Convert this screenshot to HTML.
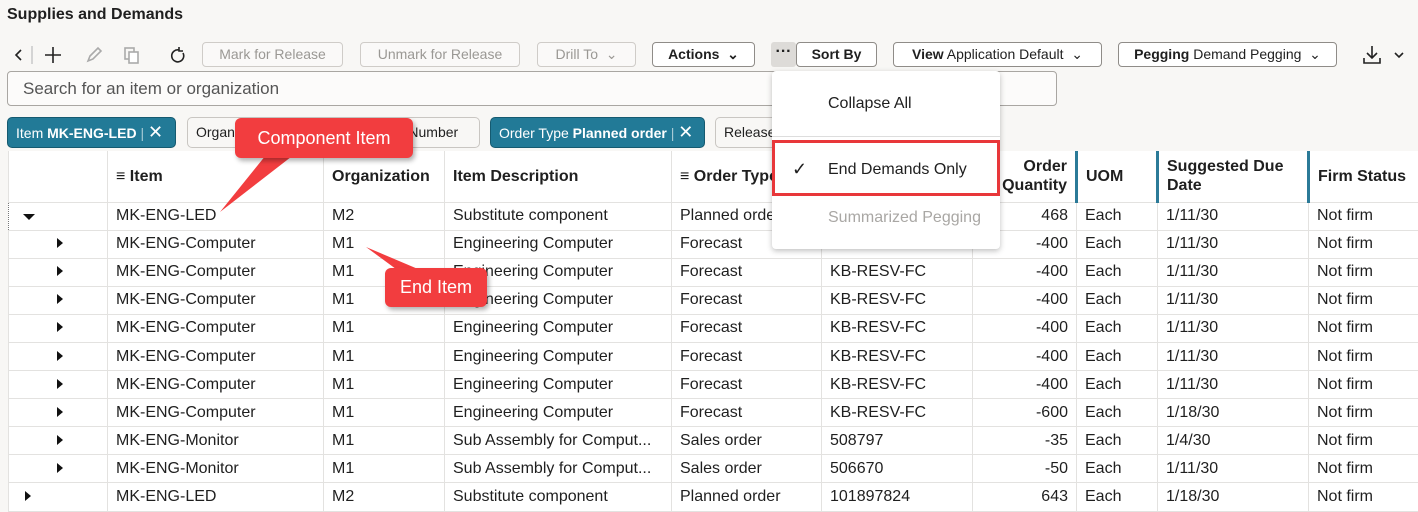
<!DOCTYPE html>
<html><head><style>
*{box-sizing:border-box;margin:0;padding:0}
body{width:1418px;height:510px;overflow:hidden;background:#f8f7f5;font-family:"Liberation Sans",sans-serif;color:#1f1f1f;position:relative}
.a{position:absolute}
.btn{position:absolute;top:42px;height:25px;border:1px solid #8f8c88;border-radius:4px;font-size:14px;line-height:23px;text-align:center;background:#fff;color:#1f1f1f}
.dis{border-color:#cfccc8;color:#9a9894;background:#faf9f8}
.chip{position:absolute;top:117px;height:31px;border-radius:5px;font-size:14px;line-height:29px;padding:0 8px;border:1px solid #c9c6c2;background:#f8f7f5}
.chipb{background:#227a97;border-color:#155a70;color:#fff}
table{position:absolute;left:8px;top:151px;width:1410px;border-collapse:collapse;background:#fff;font-size:16px;table-layout:fixed}
td,th{border:1px solid #e3e2e0;height:28.1px;padding:0 8px;white-space:nowrap;overflow:hidden;text-align:left;font-weight:normal}
th{height:51px;font-weight:bold;font-size:16px;line-height:19px;border-top:none}
.r{text-align:right}
.bl{border-left:3px solid #2b7a98}
.tri{display:inline-block;width:0;height:0;border-top:5px solid transparent;border-bottom:5px solid transparent;border-left:6px solid #111}
.tridn{display:inline-block;width:0;height:0;border-left:6px solid transparent;border-right:6px solid transparent;border-top:6px solid #111}
.call{position:absolute;background:#f23d3f;color:#fff;font-size:18px;border-radius:6px;text-align:center;box-shadow:2px 3px 5px rgba(0,0,0,.3)}
</style></head><body>
<div class="a" style="left:7px;top:6px;font-size:16px;font-weight:bold">Supplies and Demands</div>
<svg class="a" style="left:8px;top:44px" width="190" height="22" viewBox="0 0 190 22" fill="none" stroke="#222" stroke-width="1.6">
<path d="M13 6l-5 5 5 5"/><line x1="24" y1="2" x2="24" y2="20" stroke="#ccc"/>
<path d="M45 3v16M37 11h16"/>
<path d="M80 17l2-5 8-8 3 3-8 8z" stroke="#aaa"/>
<rect x="117" y="4" width="9" height="11" stroke="#aaa"/><rect x="121" y="8" width="9" height="11" stroke="#aaa" fill="#fff"/>
<path d="M171 6a6 6 0 1 0 4 3M171 3v4h4" />
</svg>
<div class="btn dis" style="left:202px;width:141px">Mark for Release</div>
<div class="btn dis" style="left:360px;width:160px">Unmark for Release</div>
<div class="btn dis" style="left:537px;width:99px">Drill To &nbsp;⌄</div>
<div class="btn" style="left:652px;width:103px;font-weight:bold">Actions &nbsp;⌄</div>
<div class="a" style="left:771px;top:42px;width:25px;height:25px;background:#dddbd8;border-radius:3px;text-align:center;font-weight:bold;line-height:20px">···</div>
<div class="btn" style="left:796px;width:81px;font-weight:bold">Sort By</div>
<div class="btn" style="left:893px;width:209px"><b>View</b> Application Default &nbsp;⌄</div>
<div class="btn" style="left:1118px;width:219px"><b>Pegging</b> Demand Pegging &nbsp;⌄</div>
<svg class="a" style="left:1362px;top:44px" width="50" height="22" fill="none" stroke="#222" stroke-width="1.6"><path d="M10 2v12M5 9l5 5 5-5M2 14v5h16v-5"/><path d="M33 9l4 4 4-4"/></svg>
<div class="a" style="left:7px;top:71px;width:1050px;height:35px;border:1px solid #a9a6a2;border-radius:4px;background:#fcfbfa;font-size:17px;line-height:33px;padding-left:15px;color:#555">Search for an item or organization</div>
<div class="chip chipb" style="left:7px;width:169px">Item <b>MK-ENG-LED</b> <span style="opacity:.6">|</span> <span style="font-size:18px">✕</span></div>
<div class="chip" style="left:187px;width:293px">Organization &nbsp; &nbsp; &nbsp; &nbsp; &nbsp; &nbsp; &nbsp; &nbsp; &nbsp; &nbsp; &nbsp; &nbsp;Order Number</div>
<div class="chip chipb" style="left:490px;width:215px">Order Type <b>Planned order</b> <span style="opacity:.6">|</span> <span style="font-size:18px">✕</span></div>
<div class="chip" style="left:715px;width:70px">Release</div>
<table>
<colgroup><col style="width:99px"><col style="width:216px"><col style="width:121px"><col style="width:227px"><col style="width:150px"><col style="width:151px"><col style="width:104px"><col style="width:81px"><col style="width:151px"><col style="width:110px"></colgroup>
<tr><th></th><th><span style="font-weight:normal">≡</span> Item</th><th>Organization</th><th>Item Description</th><th><span style="font-weight:normal">≡</span> Order Type</th><th>Order Number</th><th class="r">Order<br>Quantity</th><th class="bl">UOM</th><th class="bl">Suggested Due<br>Date</th><th class="bl">Firm Status</th></tr>
<tr><td style="padding-left:14px;border:1px dotted #777"><span class="tridn"></span></td><td>MK-ENG-LED</td><td>M2</td><td>Substitute component</td><td>Planned order</td><td>101897823</td><td class="r">468</td><td>Each</td><td>1/11/30</td><td>Not firm</td></tr>
<tr><td style="padding-left:48px"><span class="tri"></span></td><td>MK-ENG-Computer</td><td>M1</td><td>Engineering Computer</td><td>Forecast</td><td>KB-RESV-FC</td><td class="r">-400</td><td>Each</td><td>1/11/30</td><td>Not firm</td></tr>
<tr><td style="padding-left:48px"><span class="tri"></span></td><td>MK-ENG-Computer</td><td>M1</td><td>Engineering Computer</td><td>Forecast</td><td>KB-RESV-FC</td><td class="r">-400</td><td>Each</td><td>1/11/30</td><td>Not firm</td></tr>
<tr><td style="padding-left:48px"><span class="tri"></span></td><td>MK-ENG-Computer</td><td>M1</td><td>Engineering Computer</td><td>Forecast</td><td>KB-RESV-FC</td><td class="r">-400</td><td>Each</td><td>1/11/30</td><td>Not firm</td></tr>
<tr><td style="padding-left:48px"><span class="tri"></span></td><td>MK-ENG-Computer</td><td>M1</td><td>Engineering Computer</td><td>Forecast</td><td>KB-RESV-FC</td><td class="r">-400</td><td>Each</td><td>1/11/30</td><td>Not firm</td></tr>
<tr><td style="padding-left:48px"><span class="tri"></span></td><td>MK-ENG-Computer</td><td>M1</td><td>Engineering Computer</td><td>Forecast</td><td>KB-RESV-FC</td><td class="r">-400</td><td>Each</td><td>1/11/30</td><td>Not firm</td></tr>
<tr><td style="padding-left:48px"><span class="tri"></span></td><td>MK-ENG-Computer</td><td>M1</td><td>Engineering Computer</td><td>Forecast</td><td>KB-RESV-FC</td><td class="r">-400</td><td>Each</td><td>1/11/30</td><td>Not firm</td></tr>
<tr><td style="padding-left:48px"><span class="tri"></span></td><td>MK-ENG-Computer</td><td>M1</td><td>Engineering Computer</td><td>Forecast</td><td>KB-RESV-FC</td><td class="r">-600</td><td>Each</td><td>1/18/30</td><td>Not firm</td></tr>
<tr><td style="padding-left:48px"><span class="tri"></span></td><td>MK-ENG-Monitor</td><td>M1</td><td>Sub Assembly for Comput...</td><td>Sales order</td><td>508797</td><td class="r">-35</td><td>Each</td><td>1/4/30</td><td>Not firm</td></tr>
<tr><td style="padding-left:48px"><span class="tri"></span></td><td>MK-ENG-Monitor</td><td>M1</td><td>Sub Assembly for Comput...</td><td>Sales order</td><td>506670</td><td class="r">-50</td><td>Each</td><td>1/11/30</td><td>Not firm</td></tr>
<tr><td style="padding-left:16px"><span class="tri"></span></td><td>MK-ENG-LED</td><td>M2</td><td>Substitute component</td><td>Planned order</td><td>101897824</td><td class="r">643</td><td>Each</td><td>1/18/30</td><td>Not firm</td></tr>
</table>
<div class="a" style="left:772px;top:71px;width:228px;height:178px;background:#fff;border-radius:4px;box-shadow:0 2px 6px rgba(0,0,0,.25);font-size:16px">
<div class="a" style="left:56px;top:24px">Collapse All</div>
<div class="a" style="left:0;width:228px;top:65px;border-top:1px solid #ddd"></div>
<div class="a" style="left:0;top:69px;width:228px;height:56px;border:3px solid #e8373a"></div>
<div class="a" style="left:20px;top:88px;font-size:18px">✓</div>
<div class="a" style="left:56px;top:90px">End Demands Only</div>
<div class="a" style="left:56px;top:138px;color:#a9a7a4">Summarized Pegging</div>
</div>
<svg class="a" style="left:0;top:0" width="1418" height="510"><polygon points="270,150 300,150 220,212" fill="#f23d3f"/><polygon points="366,247 400,272 425,272" fill="#f23d3f"/></svg>
<div class="call" style="left:235px;top:118px;width:178px;height:40px;line-height:40px">Component Item</div>
<div class="call" style="left:385px;top:268px;width:102px;height:39px;line-height:39px">End Item</div>
</body></html>
